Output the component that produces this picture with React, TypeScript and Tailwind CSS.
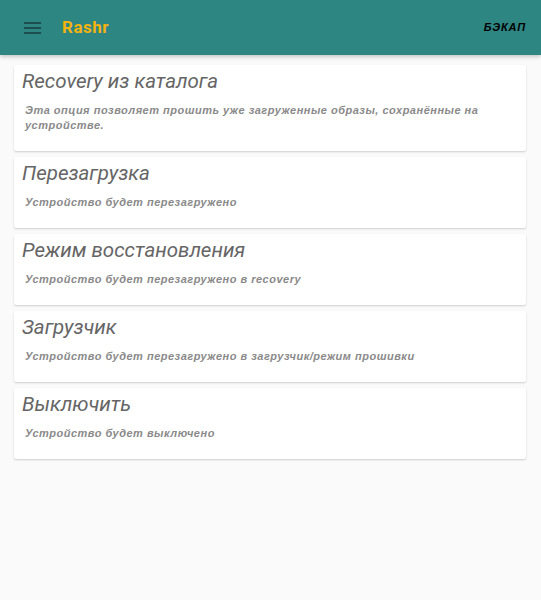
import React from 'react';

interface OptionCardProps {
  title: string;
  description: string;
}

const options: OptionCardProps[] = [
  {
    title: 'Recovery из каталога',
    description: 'Эта опция позволяет прошить уже загруженные образы, сохранённые на устройстве.',
  },
  { title: 'Перезагрузка', description: 'Устройство будет перезагружено' },
  { title: 'Режим восстановления', description: 'Устройство будет перезагружено в recovery' },
  { title: 'Загрузчик', description: 'Устройство будет перезагружено в загрузчик/режим прошивки' },
  { title: 'Выключить', description: 'Устройство будет выключено' },
];

const OptionCard: React.FC<OptionCardProps> = ({ title, description }) => (
  <div className="bg-white rounded-[2px] px-2 pt-[2px] pb-[18px] shadow-[0_1px_2px_rgba(0,0,0,0.18)]">
    <h2 className="text-[20.5px] leading-[28px] italic text-[#656565] font-['Roboto',sans-serif]">
      {title}
    </h2>
    <p className="mt-[8px] pl-[3px] pr-[30px] text-[11px] leading-[15px] font-bold italic text-[#8a8a8a] tracking-[0.5px] font-['Liberation_Sans',sans-serif]">
      {description}
    </p>
  </div>
);

export default function App() {
  return (
    <div className="min-h-[600px] bg-[#fafafa] font-['Roboto',sans-serif]">
      {/* Toolbar */}
      <header className="h-[55px] bg-[#2e8683] flex items-center px-6 shadow-[0_2px_4px_rgba(0,0,0,0.2)]">
        <svg width="17" height="12" viewBox="0 0 17 12" className="shrink-0">
          <rect x="0" y="0" width="17" height="2" fill="#1d4d4c" />
          <rect x="0" y="5" width="17" height="2" fill="#1d4d4c" />
          <rect x="0" y="10" width="17" height="2" fill="#1d4d4c" />
        </svg>
        <span className="ml-[21px] text-[17px] font-bold tracking-[0.5px] text-[#f4b30f]">Rashr</span>
        <span className="ml-auto -mr-[9px] text-[11px] font-bold italic text-black tracking-[0.9px] font-['Liberation_Sans',sans-serif]">
          БЭКАП
        </span>
      </header>

      {/* Options */}
      <main className="flex flex-col gap-[6px] pt-[10px] px-[14px] pr-[15px]">
        {options.map((o) => (
          <OptionCard key={o.title} {...o} />
        ))}
      </main>
    </div>
  );
}
